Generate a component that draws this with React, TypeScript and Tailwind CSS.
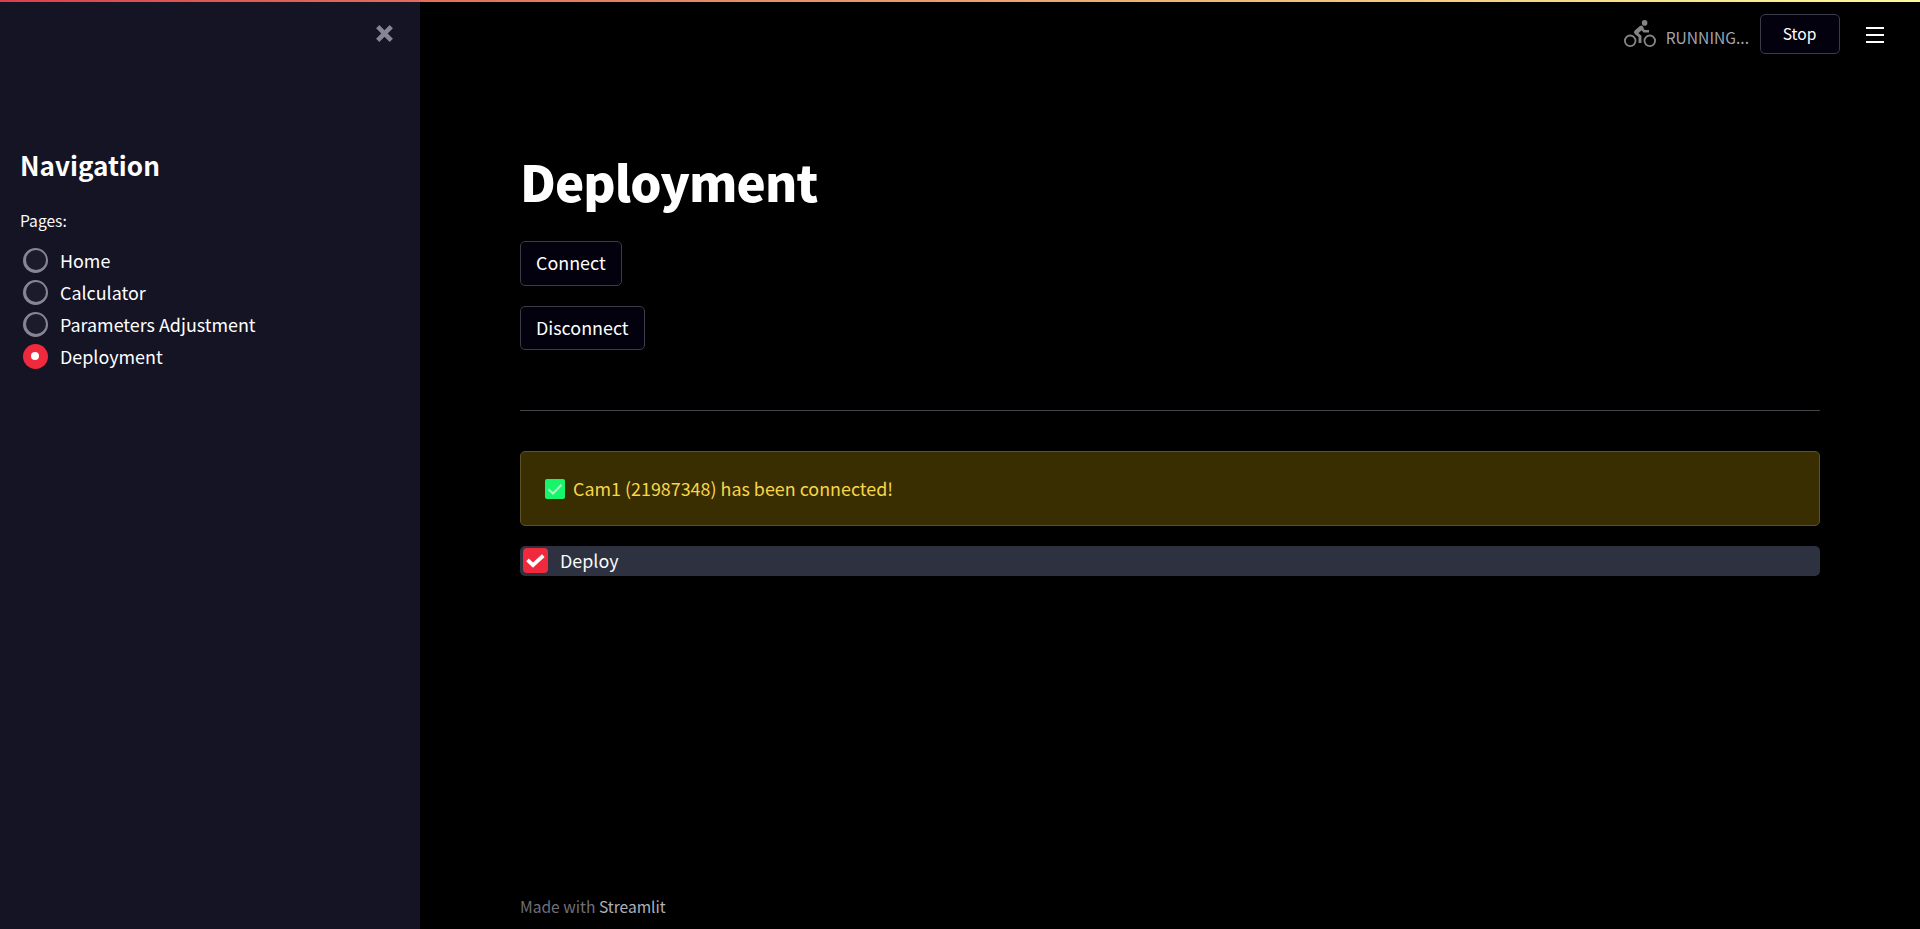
const pages = ["Home", "Calculator", "Parameters Adjustment", "Deployment"];
const selectedPage = "Deployment";

function PageOption({ label, selected }: { label: string; selected: boolean }) {
  return (
    <li className="flex h-8 items-center gap-3 pl-[3px]">
      {selected ? (
        <span className="flex size-[25px] items-center justify-center rounded-full bg-[#ee2a3c] pr-px">
          <span className="size-2 rounded-full bg-white" />
        </span>
      ) : (
        <span className="size-[25px] rounded-full bg-[#858595] p-[2.5px]">
          <span className="block size-full rounded-full bg-[#1b1b2b]" />
        </span>
      )}
      <span className="text-[17.9px] leading-8 text-white">{label}</span>
    </li>
  );
}

function Sidebar() {
  return (
    <aside className="flex w-[420px] shrink-0 flex-col bg-[#141424] text-[#fafafa]">
      <div className="flex h-[64px] justify-end pt-[23px] pr-[27px]">
        <svg className="size-[17px]" viewBox="0 0 17 17" stroke="#858595" strokeWidth="4.6">
          <path d="M1.7 1.7 15.3 15.3M15.3 1.7 1.7 15.3" />
        </svg>
      </div>
      <nav className="px-5 pt-[81px]">
        <h2 className="text-[26.1px] leading-9 font-bold text-white">Navigation</h2>
        <p className="mt-[23px] text-[15.6px] leading-7">Pages:</p>
        <ul className="mt-[10px]">
          {pages.map((page) => (
            <PageOption key={page} label={page} selected={page === selectedPage} />
          ))}
        </ul>
      </nav>
    </aside>
  );
}

function CyclistIcon() {
  return (
    <svg className="h-[28px] w-8" viewBox="0 0 32 28" fill="none" stroke="#858585">
      <circle cx="6.2" cy="20.8" r="5.3" strokeWidth="1.8" />
      <circle cx="25.8" cy="20.8" r="5.3" strokeWidth="1.8" />
      <circle cx="20.6" cy="2.9" r="2.8" fill="#858585" stroke="none" />
      <path d="M17.3 7.8 12.2 12.1" strokeWidth="4.4" strokeLinecap="round" />
      <path d="M17.8 8 20 11.2H25" strokeWidth="2.4" strokeLinejoin="round" />
      <path d="M11.5 12.6 16 16.4V23" strokeWidth="2.9" strokeLinejoin="round" />
    </svg>
  );
}

function Header() {
  return (
    <header className="flex h-[64px] items-start justify-end pt-3 pr-9">
      <div className="mt-[6px] mr-[10px]">
        <CyclistIcon />
      </div>
      <span className="mt-[11px] mr-[11px] text-[15.6px] leading-6 text-[#a3a3b3]">RUNNING...</span>
      <button className="h-10 w-20 rounded-[5px] border border-[#3b3b49] bg-[#02010d] pr-px pb-[3px] text-[15.6px] leading-6 text-white">
        Stop
      </button>
      <div className="mt-[13px] ml-[26px] flex w-[18px] flex-col gap-[5px]">
        <span className="h-[2px] bg-white" />
        <span className="h-[2px] bg-white" />
        <span className="h-[2px] bg-white" />
      </div>
    </header>
  );
}

function ActionButton({ label }: { label: string }) {
  return (
    <button className="flex h-full items-center rounded-[5px] border border-[#3b3b49] bg-[#02010d] px-[15px] pb-[3px] text-[17.9px] leading-8 text-white">
      {label}
    </button>
  );
}

export default function App() {
  return (
    <div className="flex h-[929px] w-[1920px] flex-col overflow-hidden bg-black font-['Noto_Sans_CJK_SC',sans-serif]">
      <div className="h-[2px] shrink-0 bg-linear-to-r from-[#d8404e] via-[#e8a070] to-[#fcfc98]" />
      <div className="flex min-h-0 grow">
        <Sidebar />
        <div className="flex grow flex-col">
          <Header />
          <main className="flex grow flex-col items-start px-[100px] pt-[82px]">
            <h1 className="text-[49.2px] leading-[66px] font-black tracking-[-0.9px] text-white">Deployment</h1>
            <div className="mt-[27px] grid grid-rows-[45px_44px] justify-items-start gap-5">
              <ActionButton label="Connect" />
              <ActionButton label="Disconnect" />
            </div>
            <hr className="mt-[60px] w-full border-[#424248]" />
            <div className="mt-10 flex h-[75px] w-full items-center rounded-[5px] border border-[#5c5426] bg-[#382e02] pl-6">
              <svg className="size-5" viewBox="0 0 20 20">
                <rect width="20" height="20" rx="2" fill="#17f56a" />
                <path d="M3.5 10.2 8 14.5 16.5 5.7" fill="none" stroke="#a5fbc2" strokeWidth="2" />
              </svg>
              <span className="ml-2 pb-[2px] text-[17.9px] leading-8 text-[#f8d648]">Cam1 (21987348) has been connected!</span>
            </div>
            <label className="mt-5 flex h-[30px] w-full items-center rounded-[5px] bg-[#2d3140] pb-px pl-[3px]">
              <span className="flex size-[25px] items-center justify-center rounded-[4px] bg-[#ee2a3c]">
                <svg className="h-[14px] w-[19px]" viewBox="0 0 19 14" fill="none" stroke="white" strokeWidth="3.8">
                  <path d="M1.5 5.8 7 11.1 17.3 1.6" />
                </svg>
              </span>
              <span className="ml-3 pb-px text-[17.9px] leading-[28px] text-[#fafafa]">Deploy</span>
            </label>
            <footer className="mt-auto pb-[9px] text-[15.6px] leading-7 text-[#70707a]">
              Made with <span className="text-[#b0b0b8]">Streamlit</span>
            </footer>
          </main>
        </div>
      </div>
    </div>
  );
}
